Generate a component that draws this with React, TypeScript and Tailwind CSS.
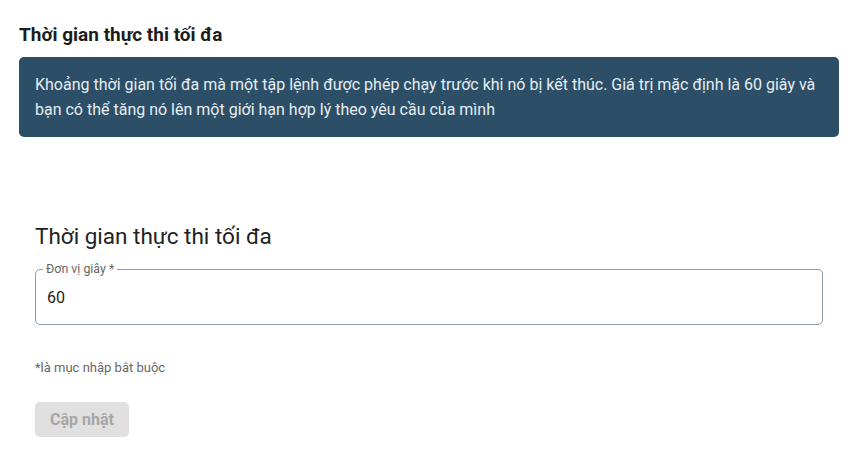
import { useState } from "react"

export default function App() {
  const [value, setValue] = useState("60")

  return (
    <main
      className="min-h-screen bg-white pl-[19px] pr-[18px] pt-[24px]"
      style={{ fontFamily: "Roboto, 'Noto Sans', sans-serif" }}
    >
      <h2 className="text-[19px] font-bold leading-[22px] text-[#1c1c1c]">Thời gian thực thi tối đa</h2>

      <div className="mt-[11px] rounded-[5px] bg-[#2c4f67] px-4 pt-[15px] pb-[15px] text-[16px] leading-[25px] text-[#e6edf2]">
        Khoảng thời gian tối đa mà một tập lệnh được phép chạy trước khi nó bị kết thúc. Giá trị mặc định là 60 giây và
        bạn có thể tăng nó lên một giới hạn hợp lý theo yêu cầu của mình
      </div>

      <section className="mt-[84px] px-4">
        <h3 className="text-[22.5px] leading-[30px] text-[#222]">Thời gian thực thi tối đa</h3>

        <fieldset className="mt-[11px] rounded-[5px] border border-[#8d9ca7] px-[11px] pb-[16px]">
          <legend className="ml-[-4px] px-[3px] text-[12.4px] leading-[14px] text-[#666]">Đơn vị giây *</legend>
          <input
            value={value}
            onChange={(e) => setValue(e.target.value)}
            className="block w-full bg-transparent pt-[12px] text-[16px] leading-[20px] text-[#1c1c1c] outline-none"
          />
        </fieldset>

        <p className="mt-[35px] text-[13px] leading-[16px] text-[#666]">*là mục nhập bắt buộc</p>

        <button
          disabled
          className="mt-[26px] h-[35px] w-[94px] rounded-[5px] bg-[#e0e0e0] text-[16px] font-bold text-[#a6a6a6]"
        >
          Cập nhật
        </button>
      </section>
    </main>
  )
}
